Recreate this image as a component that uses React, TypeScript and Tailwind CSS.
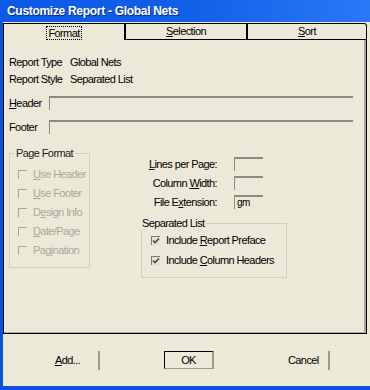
import React from 'react'

const font = { fontFamily: '"Liberation Sans", Arial, sans-serif' }

function Check({ checked, disabled }: { checked?: boolean; disabled?: boolean }) {
  return (
    <span
      className={`w-[9px] h-[9px] border-t border-l shrink-0 flex items-center justify-center ${
        disabled ? 'border-[#aca899]' : 'border-[#7a7a7a] bg-[#e4e1d3]'
      }`}
    >
      {checked && (
        <svg width="8" height="8" viewBox="0 0 8 8">
          <path d="M1 3.5 L3 5.5 L7 1.5" stroke="#4a4a4a" strokeWidth="1.6" fill="none" />
        </svg>
      )}
    </span>
  )
}

function Field({ value, w }: { value?: string; w: string }) {
  return (
    <div className={`${w} h-[14px] border-t-2 border-l border-t-[#8d8b80] border-l-[#8d8b80] text-[10px] leading-[11px] pl-[2px]`}>
      {value}
    </div>
  )
}

const PAGE_OPTS: [string, string, string][] = [
  ['', 'U', 'se Header'],
  ['', 'U', 'se Footer'],
  ['D', 'e', 'sign Info'],
  ['', 'D', 'ate/Page'],
  ['Pag', 'i', 'nation'],
]

export default function App() {
  return (
    <div className="w-[370px] h-[390px] flex flex-col bg-[#0a52dc] overflow-hidden text-black" style={font}>
      {/* Title bar */}
      <div className="h-[22px] shrink-0 bg-gradient-to-r from-[#0b5ae6] via-[#125fe8] to-[#2a78f6] flex items-center pl-[7px]">
        <span className="text-white font-bold text-[12px] tracking-[-0.3px] [text-shadow:1px_1px_0_#0a2c8a]">
          Customize Report - Global Nets
        </span>
      </div>

      <div className="flex-1 ml-[3px] mb-[4px] bg-[#ece9d8] flex flex-col text-[11px] tracking-[-0.6px]">
        {/* Tabs */}
        <div className="mt-[1px] h-[17px] w-[364px] flex shrink-0">
          <div className="w-[121px] border-t border-l border-black flex items-start justify-center pt-[2px]">
            <span className="border border-dotted border-black px-[1px] leading-[12px]">Format</span>
          </div>
          <div className="w-[122px] border-t border-l-2 border-b border-black flex items-center justify-center">
            <span><u>S</u>election</span>
          </div>
          <div className="w-[121px] border-t border-l-2 border-b border-r border-black rounded-tr-[3px] flex items-center justify-center">
            <span><u>S</u>ort</span>
          </div>
        </div>

        {/* Panel */}
        <div className="w-[364px] h-[294px] shrink-0 border-l border-r border-b border-black shadow-[inset_-2px_-1px_0_#aca899] pl-[5px] pt-[14px] flex flex-col">
          <div className="flex h-[17px] items-center">
            <span className="w-[61px]">Report Type</span>
            <span>Global Nets</span>
          </div>
          <div className="flex h-[17px] items-center">
            <span className="w-[61px]">Report Style</span>
            <span>Separated List</span>
          </div>

          <div className="flex items-center mt-[8px] h-[14px]">
            <span className="w-[40px]"><u>H</u>eader</span>
            <Field w="w-[304px]" />
          </div>
          <div className="flex items-center mt-[10px] h-[14px]">
            <span className="w-[40px]">Footer</span>
            <Field w="w-[304px]" />
          </div>

          <div className="flex items-start mt-[12px]">
            <fieldset className="w-[81px] border border-[#d0d0bf] pt-[5px] pb-[7px] pl-[8px]">
              <legend className="ml-[-4px] px-[2px] leading-[14px] text-[#222]">Page Format</legend>
              {PAGE_OPTS.map(([a, u, b]) => (
                <div key={a + u + b} className="h-[19px] flex items-center gap-[6px] text-[#aca899]">
                  <Check disabled />
                  <span>
                    {a}
                    <u>{u}</u>
                    {b}
                  </span>
                </div>
              ))}
            </fieldset>

            <div className="ml-[51px] mt-[10px] flex flex-col">
              <div className="h-[19px] flex items-start">
                <span className="w-[76px] text-right leading-[16px]"><u>L</u>ines per Page:</span>
                <div className="ml-[17px] mt-[1px]"><Field w="w-[29px]" /></div>
              </div>
              <div className="h-[19px] flex items-start">
                <span className="w-[76px] text-right leading-[16px]">Column <u>W</u>idth:</span>
                <div className="ml-[17px] mt-[1px]"><Field w="w-[29px]" /></div>
              </div>
              <div className="h-[19px] flex items-start">
                <span className="w-[76px] text-right leading-[16px]">File E<u>x</u>tension:</span>
                <div className="ml-[17px] mt-[1px]"><Field w="w-[29px]" value="gm" /></div>
              </div>

              <fieldset className="mt-[3px] w-[146px] border border-[#d0d0bf] pb-[7px] pl-[9px]">
                <legend className="ml-[-10px] px-[1px] leading-[14px]">Separated List</legend>
                <div className="h-[20px] flex items-center gap-[6px]">
                  <Check checked />
                  <span>Include <u>R</u>eport Preface</span>
                </div>
                <div className="h-[20px] flex items-center gap-[6px]">
                  <Check checked />
                  <span>Include <u>C</u>olumn Headers</span>
                </div>
              </fieldset>
            </div>
          </div>
        </div>

        {/* Buttons */}
        <div className="flex-1 flex items-center">
          <span className="ml-[52px] w-[43px]"><u>A</u>dd...</span>
          <span className="w-[2px] h-[19px] bg-[#9d9a8c]" />
          <div className="ml-[64px] w-[50px] h-[18px] border-t border-l border-black border-r-2 border-b border-r-[#9d9a8c] border-b-[#9d9a8c] flex items-center justify-center">
            OK
          </div>
          <span className="ml-[74px] w-[40px]">Cancel</span>
          <span className="w-[2px] h-[19px] bg-[#9d9a8c]" />
        </div>
      </div>
    </div>
  )
}
